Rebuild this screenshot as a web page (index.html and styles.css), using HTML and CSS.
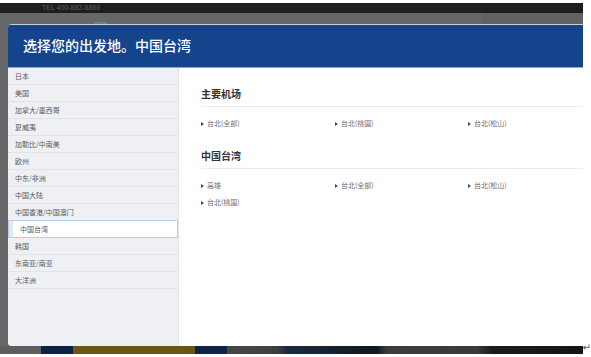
FILE: index.html
```html
<!DOCTYPE html>
<html lang="zh-CN">
<head>
<meta charset="utf-8">
<title>选择您的出发地</title>
<link rel="stylesheet" href="styles.css">
</head>
<body>
<div class="shot">
  <div class="screen">
    <div class="topbar"><span class="tel">TEL 400-882-8888</span></div>
    <div class="band"><span class="band-tab"></span></div>
    <div class="stage">
      <div class="modal">
        <div class="modal-head"><h1 class="title">选择您的出发地。中国台湾</h1></div>
        <div class="modal-body">
          <ul class="regions">
            <li class="region">日本</li>
            <li class="region">美国</li>
            <li class="region">加拿大/墨西哥</li>
            <li class="region">夏威夷</li>
            <li class="region">加勒比/中南美</li>
            <li class="region">欧州</li>
            <li class="region">中东/非洲</li>
            <li class="region">中国大陆</li>
            <li class="region">中国香港/中国澳门</li>
            <li class="region region-active">中国台湾</li>
            <li class="region">韩国</li>
            <li class="region">东南亚/南亚</li>
            <li class="region">大洋洲</li>
          </ul>
          <div class="content">
            <section class="group">
              <h2 class="group-title">主要机场</h2>
              <ul class="links">
                <li class="link">台北(全部)</li>
                <li class="link">台北(桃園)</li>
                <li class="link">台北(松山)</li>
              </ul>
            </section>
            <section class="group">
              <h2 class="group-title">中国台湾</h2>
              <ul class="links">
                <li class="link">高雄</li>
                <li class="link">台北(全部)</li>
                <li class="link">台北(松山)</li>
                <li class="link">台北(桃園)</li>
              </ul>
            </section>
          </div>
        </div>
      </div>
    </div>
    <div class="strip">
      <span class="seg seg-grey"></span>
      <span class="seg seg-navy"></span>
      <span class="seg seg-gold"></span>
      <span class="seg seg-navy2"></span>
      <span class="seg seg-dark"></span>
    </div>
  </div>
  <span class="mark">↵</span>
</div>
</body>
</html>
```
FILE: styles.css
```css
html, body {
  margin: 0;
  padding: 0;
  background: #ffffff;
}

body {
  font-family: "Noto Sans CJK SC", "Noto Sans", sans-serif;
  width: 591px;
  height: 357px;
  overflow: hidden;
}

.shot {
  display: flex;
  align-items: flex-end;
  padding-top: 3px;
}

.screen {
  width: 583px;
  height: 351px;
  background: #676767;
  display: flex;
  flex-direction: column;
}

.topbar {
  height: 10px;
  background: #1e1e1e;
  display: flex;
  align-items: center;
  padding-left: 42px;
}

.tel {
  font-family: "Liberation Sans", Arial, sans-serif;
  font-size: 7px;
  line-height: 10px;
  color: #5a5a5a;
}

.band {
  height: 11px;
  background: linear-gradient(90deg, #676767 0, #676767 482px, #626262 482px);
  position: relative;
}

.band-tab {
  position: absolute;
  left: 94px;
  bottom: 0;
  width: 13px;
  height: 2px;
  background: #767b84;
}

.stage {
  height: 322px;
  padding-left: 8px;
  display: flex;
}

.modal {
  flex: 1;
  display: flex;
  flex-direction: column;
  border-radius: 4px 0 0 4px;
  overflow: hidden;
  background: #ffffff;
}

.modal-head {
  height: 42px;
  border-top: 1px solid #c9ced8;
  border-bottom: 1px solid #8fa6cc;
  background: #13448c;
  display: flex;
  align-items: center;
  padding-left: 15px;
}

.title {
  margin: 0 0 3px 0;
  font-size: 14px;
  font-weight: 500;
  line-height: 18px;
  color: #ffffff;
}

.modal-body {
  flex: 1;
  display: flex;
}

.regions {
  list-style: none;
  margin: 0;
  padding: 0;
  width: 170px;
  background: #eff0f4;
  border-right: 1px solid #e3e4e9;
}

.region {
  height: 16px;
  line-height: 16px;
  border-bottom: 1px solid #e2e3e8;
  padding-left: 7px;
  font-size: 7px;
  color: #5a5a5a;
}

.region-active {
  background: #ffffff;
  border: 1px solid #b8cdee;
  height: 16px;
  line-height: 16px;
  margin-top: -1px;
  padding-left: 11px;
  box-shadow: inset 4px 0 0 #e6e7ec;
}

.content {
  flex: 1;
  padding: 19px 0 0 22px;
}

.group + .group {
  margin-top: 17px;
}

.group-title {
  margin: 0;
  font-size: 10px;
  font-weight: bold;
  line-height: 14px;
  color: #333333;
  padding-bottom: 5px;
  border-bottom: 1px solid #ececec;
}

.links {
  list-style: none;
  margin: 0;
  padding: 8px 0 0 0;
  display: grid;
  grid-template-columns: 134px 133px 1fr;
}

.link {
  height: 17px;
  line-height: 17px;
  font-size: 7px;
  color: #707070;
  display: flex;
  align-items: center;
  gap: 3px;
}

.link::before {
  content: "";
  width: 0;
  height: 0;
  border-top: 2px solid transparent;
  border-bottom: 2px solid transparent;
  border-left: 3px solid #1d4f9e;
}

.strip {
  height: 8px;
  display: flex;
}

.seg {
  display: block;
  height: 100%;
}

.seg-grey { width: 41px; background: #5e5e5e; }
.seg-navy { width: 32px; background: #0f2148; }
.seg-gold { width: 122px; background: #6b5612; }
.seg-navy2 { width: 32px; background: #0f234a; }
.seg-dark {
  flex: 1;
  background: linear-gradient(90deg, #474747 0, #3f3f3f 50px, #1a2a3c 60px, #101820 150px, #3d3d3d 160px, #3a3a3a 250px, #1c1c1c 265px, #151515 356px);
}

.mark {
  font-family: "DejaVu Sans", sans-serif;
  font-size: 10px;
  line-height: 10px;
  color: #555555;
  margin-bottom: 1px;
}
```
